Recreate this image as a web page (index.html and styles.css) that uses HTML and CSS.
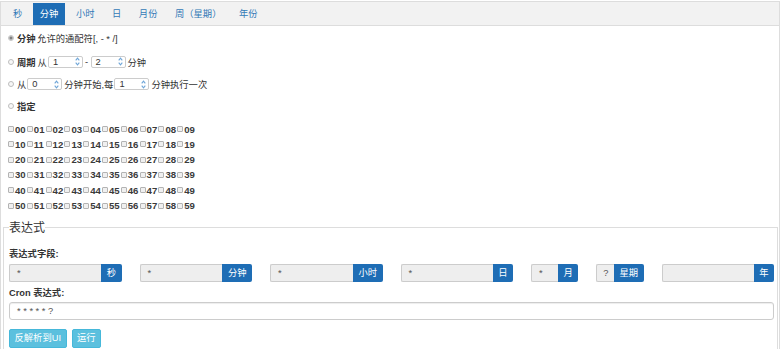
FILE: index.html
```html
<!DOCTYPE html>
<html lang="zh-CN">
<head>
<meta charset="utf-8">
<title>Cron</title>
<link rel="stylesheet" href="styles.css">
</head>
<body>
<div class="panel">
  <ul class="tabs">
    <li class="tab">秒</li>
    <li class="tab active">分钟</li>
    <li class="tab">小时</li>
    <li class="tab">日</li>
    <li class="tab">月份</li>
    <li class="tab">周（星期）</li>
    <li class="tab">年份</li>
  </ul>
  <div class="pane">
    <div class="opt opt1"><span class="radio checked"></span><b>分钟</b><span class="ml">允许的通配符[, - * /]</span></div>
    <div class="opt opt2"><span class="radio"></span><b>周期</b><span class="ml2">从</span><span class="spin s1"><span>1</span><svg class="arr" width="5" height="9" viewBox="0 0 5 9"><path d="M0.7 3.3 L2.5 1.2 L4.3 3.3 M0.7 5.7 L2.5 7.8 L4.3 5.7"/></svg></span><span class="dash">-</span><span class="spin"><span>2</span><svg class="arr" width="5" height="9" viewBox="0 0 5 9"><path d="M0.7 3.3 L2.5 1.2 L4.3 3.3 M0.7 5.7 L2.5 7.8 L4.3 5.7"/></svg></span><span class="ml2">分钟</span></div>
    <div class="opt opt3"><span class="radio"></span><span>从</span><span class="spin s1"><span>0</span><svg class="arr" width="5" height="9" viewBox="0 0 5 9"><path d="M0.7 3.3 L2.5 1.2 L4.3 3.3 M0.7 5.7 L2.5 7.8 L4.3 5.7"/></svg></span><span class="ml2">分钟开始,每</span><span class="spin"><span>1</span><svg class="arr" width="5" height="9" viewBox="0 0 5 9"><path d="M0.7 3.3 L2.5 1.2 L4.3 3.3 M0.7 5.7 L2.5 7.8 L4.3 5.7"/></svg></span><span class="ml2">分钟执行一次</span></div>
    <div class="opt opt4"><span class="radio"></span><b>指定</b></div>
    <div class="checks">
      <label class="ck"><span class="box"></span>00</label><label class="ck"><span class="box"></span>01</label><label class="ck"><span class="box"></span>02</label><label class="ck"><span class="box"></span>03</label><label class="ck"><span class="box"></span>04</label><label class="ck"><span class="box"></span>05</label><label class="ck"><span class="box"></span>06</label><label class="ck"><span class="box"></span>07</label><label class="ck"><span class="box"></span>08</label><label class="ck"><span class="box"></span>09</label>
      <label class="ck"><span class="box"></span>10</label><label class="ck"><span class="box"></span>11</label><label class="ck"><span class="box"></span>12</label><label class="ck"><span class="box"></span>13</label><label class="ck"><span class="box"></span>14</label><label class="ck"><span class="box"></span>15</label><label class="ck"><span class="box"></span>16</label><label class="ck"><span class="box"></span>17</label><label class="ck"><span class="box"></span>18</label><label class="ck"><span class="box"></span>19</label>
      <label class="ck"><span class="box"></span>20</label><label class="ck"><span class="box"></span>21</label><label class="ck"><span class="box"></span>22</label><label class="ck"><span class="box"></span>23</label><label class="ck"><span class="box"></span>24</label><label class="ck"><span class="box"></span>25</label><label class="ck"><span class="box"></span>26</label><label class="ck"><span class="box"></span>27</label><label class="ck"><span class="box"></span>28</label><label class="ck"><span class="box"></span>29</label>
      <label class="ck"><span class="box"></span>30</label><label class="ck"><span class="box"></span>31</label><label class="ck"><span class="box"></span>32</label><label class="ck"><span class="box"></span>33</label><label class="ck"><span class="box"></span>34</label><label class="ck"><span class="box"></span>35</label><label class="ck"><span class="box"></span>36</label><label class="ck"><span class="box"></span>37</label><label class="ck"><span class="box"></span>38</label><label class="ck"><span class="box"></span>39</label>
      <label class="ck"><span class="box"></span>40</label><label class="ck"><span class="box"></span>41</label><label class="ck"><span class="box"></span>42</label><label class="ck"><span class="box"></span>43</label><label class="ck"><span class="box"></span>44</label><label class="ck"><span class="box"></span>45</label><label class="ck"><span class="box"></span>46</label><label class="ck"><span class="box"></span>47</label><label class="ck"><span class="box"></span>48</label><label class="ck"><span class="box"></span>49</label>
      <label class="ck"><span class="box"></span>50</label><label class="ck"><span class="box"></span>51</label><label class="ck"><span class="box"></span>52</label><label class="ck"><span class="box"></span>53</label><label class="ck"><span class="box"></span>54</label><label class="ck"><span class="box"></span>55</label><label class="ck"><span class="box"></span>56</label><label class="ck"><span class="box"></span>57</label><label class="ck"><span class="box"></span>58</label><label class="ck"><span class="box"></span>59</label>
    </div>
  </div>
  <fieldset class="expr">
    <legend>表达式</legend>
    <div class="lbl">表达式字段:</div>
    <div class="fields">
      <div class="col"><div class="ig"><span class="iv">*</span><span class="addon">秒</span></div></div>
      <div class="col"><div class="ig"><span class="iv">*</span><span class="addon">分钟</span></div></div>
      <div class="col"><div class="ig"><span class="iv">*</span><span class="addon">小时</span></div></div>
      <div class="col"><div class="ig"><span class="iv">*</span><span class="addon">日</span></div></div>
      <div class="col split">
        <div class="half"><div class="ig"><span class="iv">*</span><span class="addon">月</span></div></div>
        <div class="half"><div class="ig"><span class="iv q">?</span><span class="addon">星期</span></div></div>
      </div>
      <div class="col"><div class="ig"><span class="iv"></span><span class="addon">年</span></div></div>
    </div>
    <div class="lbl lbl2">Cron 表达式:</div>
    <div class="cron">* * * * * ?</div>
    <div class="btns"><button class="btn" type="button">反解析到UI</button><button class="btn" type="button">运行</button></div>
  </fieldset>
</div>
</body>
</html>
```
FILE: styles.css
```css
* { box-sizing: border-box; }
html, body { margin: 0; padding: 0; background: #fff; }
body {
  padding-top: 1px;
  font-family: "Liberation Sans", "Noto Sans CJK SC", sans-serif;
  font-size: 9.3px;
  color: #333;
  overflow: hidden;
}
.panel {
  width: 780px;
  height: 400px;
  border: 1px solid #ddd;
}
.tabs {
  list-style: none;
  margin: 0;
  padding: 1px 0 0 5px;
  height: 24px;
  background: #f2f2f2;
  border-bottom: 1px solid #ddd;
  display: flex;
}
.tab {
  height: 22px;
  line-height: 22px;
  padding: 0 7px;
  margin-right: 3.5px;
  color: #337ab7;
  white-space: nowrap;
}
.tab.active { background: #1e6db5; color: #fff; }

.pane { padding-left: 7px; }
.opt { display: flex; align-items: center; height: 24px; white-space: nowrap; }
.opt2 { height: 23px; }
.opt3, .opt4 { height: 22px; }
.opt b { font-weight: bold; }
.radio {
  width: 6px; height: 6px;
  border-radius: 50%;
  border: 1px solid #bdbdbd;
  background: #f7f7f7;
  margin-right: 3px;
  flex: none;
}
.radio.checked { background: radial-gradient(circle, #808080 0 1.3px, #d6d6d6 1.8px); border-color: #c4c4c4; }
.ml { margin-left: 1.5px; }
.ml2 { margin-left: 2px; }
.dash { margin: 0 1.5px 0 2px; }
.spin {
  width: 35px; height: 12px;
  border: 1px solid #ccc;
  border-radius: 2px;
  padding: 0 2px 0 4px;
  display: flex;
  align-items: center;
  justify-content: space-between;
  line-height: 10px;
  color: #333;
  margin-left: 1px;
  flex: none;
}
.arr { display: block; }
.arr path { fill: none; stroke: #6fa6d8; stroke-width: 1.1; }

.checks {
  display: grid;
  grid-template-columns: repeat(10, 18.8px);
  grid-auto-rows: 15.3px;
  margin-top: 4.4px;
}
.ck { display: flex; align-items: center; font-weight: bold; font-size: 9.6px; color: #3a3a3a; }
.box {
  width: 6px; height: 6px;
  border: 1px solid #b3b3b3;
  background: #f0f0f0;
  border-radius: 1px;
  margin-right: 1px;
  flex: none;
}

.expr {
  margin: 7.8px 1px 0 2px;
  border: 1px solid #ddd;
  padding: 0 3px 20px 5px;
  min-width: 0;
}
.expr legend {
  padding: 0;
  font-size: 12px;
  line-height: 14px;
  color: #333;
}
.lbl { margin-top: 13px; height: 13px; line-height: 13px; font-weight: bold; }
.lbl2 { margin-top: 5px; }
.fields {
  display: grid;
  grid-template-columns: repeat(6, 1fr);
  margin: 3px -9px 0;
}
.col { padding: 0 9px; min-width: 0; }
.split { display: grid; grid-template-columns: 1fr 1fr; padding: 0; }
.half { padding: 0 9px; min-width: 0; }
.ig { display: flex; height: 18px; }
.iv {
  flex: 1; min-width: 0;
  background: #eee;
  border: 1px solid #ccc;
  border-right: none;
  border-radius: 2px 0 0 2px;
  padding-left: 7px;
  line-height: 16px;
  color: #555;
}
.iv.q { padding-left: 6px; }
.addon {
  background: #1e6db5;
  color: #fff;
  padding: 0 5.5px;
  line-height: 18px;
  border-radius: 0 2px 2px 0;
  white-space: nowrap;
}
.cron {
  margin-top: 2px;
  height: 18px;
  border: 1px solid #ccc;
  border-radius: 3px;
  padding-left: 7px;
  line-height: 16px;
  color: #555;
  box-shadow: inset 0 1px 1px rgba(0,0,0,.075);
}
.btns { margin-top: 9px; display: flex; gap: 5px; }
.btn {
  height: 19px;
  padding: 0 4.5px;
  background: #5bc0de;
  border: 1px solid #46b8da;
  border-radius: 2px;
  color: #fff;
  font: inherit;
  line-height: 17px;
}
```
